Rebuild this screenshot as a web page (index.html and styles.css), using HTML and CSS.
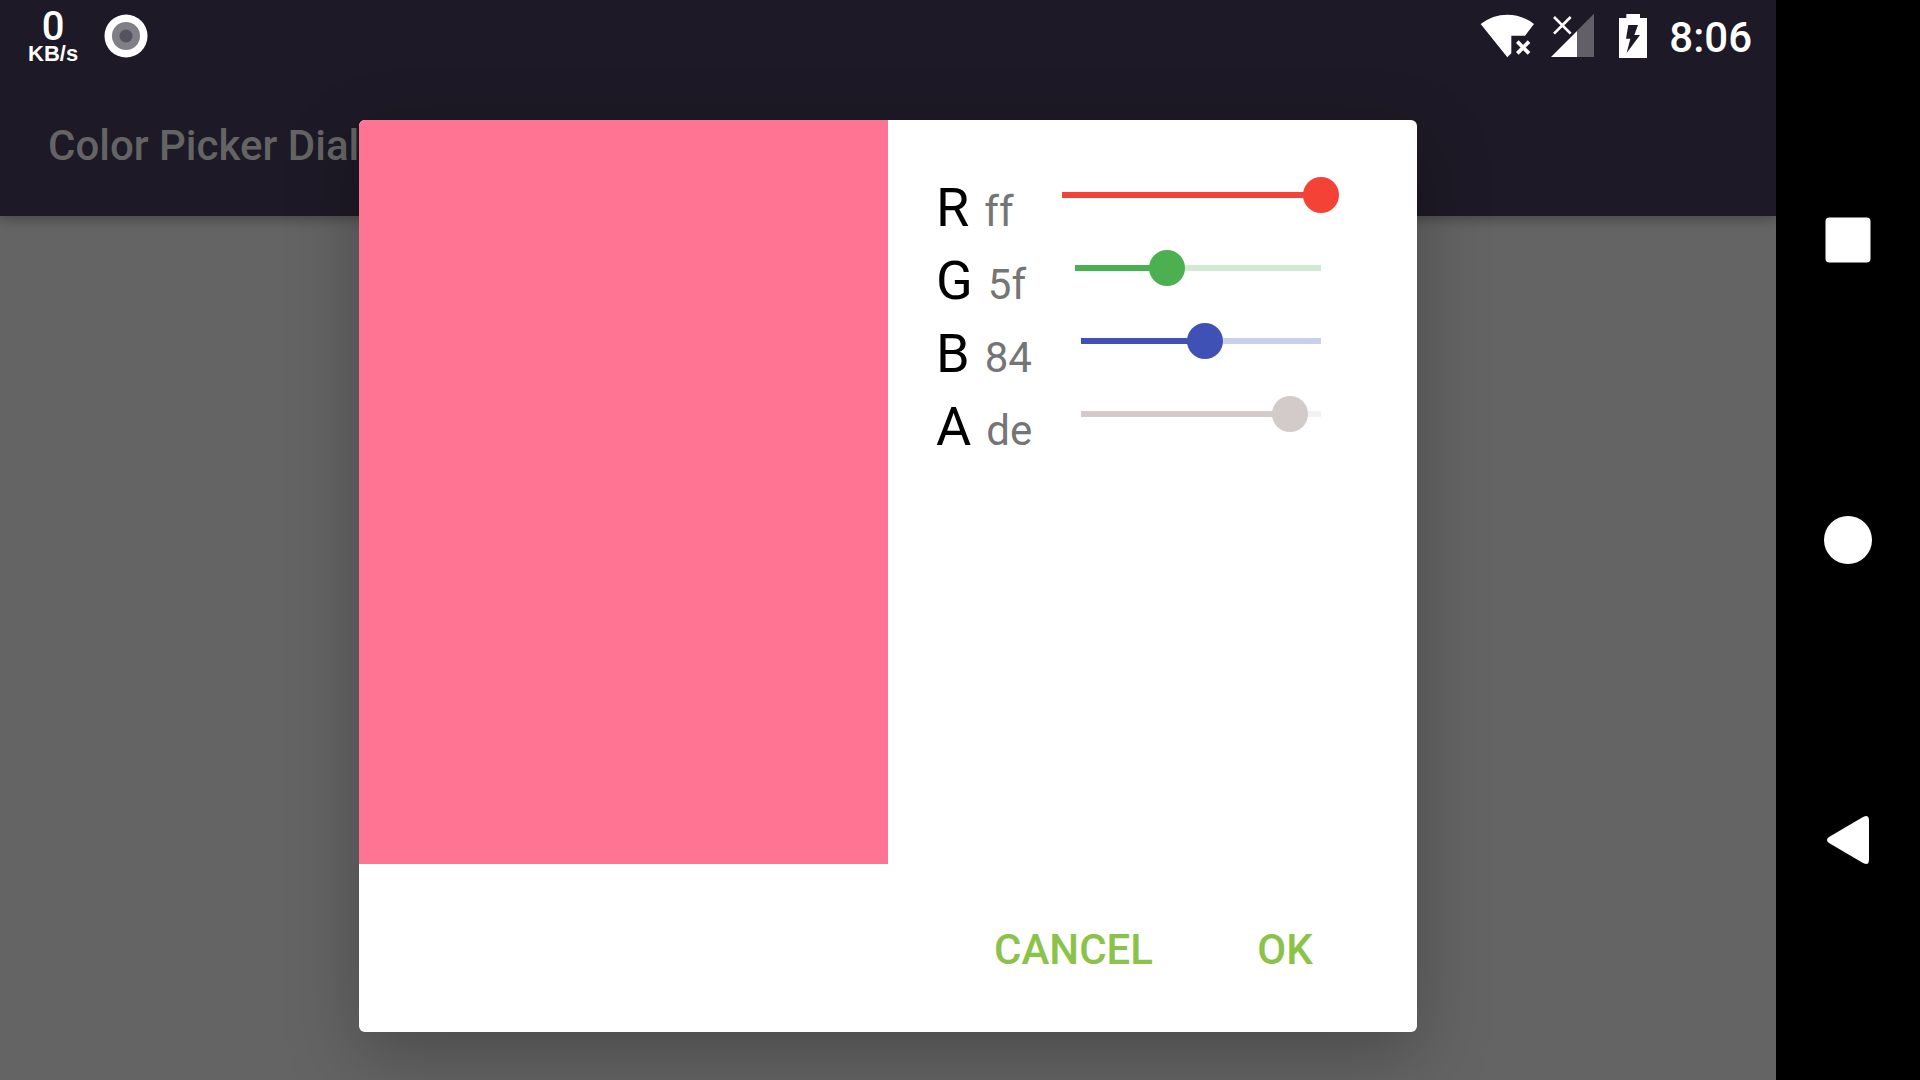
FILE: index.html
```html
<!DOCTYPE html>
<html lang="en">
<head>
<meta charset="utf-8">
<meta name="viewport" content="width=device-width, initial-scale=1">
<title>Color Picker Dialog</title>
<link rel="stylesheet" href="styles.css">
</head>
<body>
<div class="screen">
  <div class="status-bar">
    <div class="status-group">
      <div class="net-speed"><span class="net-value">0</span><span class="net-unit">KB/s</span></div>
      <svg class="record-icon" viewBox="0 0 44 44" aria-hidden="true">
        <circle cx="22" cy="22" r="21.5" fill="#fff"/>
        <circle cx="22" cy="22" r="14" fill="#807e86"/>
        <circle cx="22" cy="22" r="6.5" fill="#56535e"/>
      </svg>
    </div>
    <div class="status-group status-right">
      <svg class="wifi-icon" viewBox="60 0 165 216" aria-hidden="true">
        <path fill="#fff" d="M62 72Q98 44 142 44T222 72L195 107H154V160L142 172Z"/>
        <path stroke="#fff" stroke-width="11" d="M172 125L207 160M207 125L172 160"/>
      </svg>
      <svg class="signal-icon" viewBox="273 0 129 216" aria-hidden="true">
        <path fill="#625f69" d="M402 41V171H351V92Z"/>
        <path fill="#fff" d="M273 171L351 93V171Z"/>
        <path stroke="#fff" stroke-width="8" d="M282 51L332 101M332 51L282 101"/>
      </svg>
      <svg class="battery-icon" viewBox="477 0 84 216" aria-hidden="true">
        <path fill="#fff" d="M499 42H540V54H561V174H477V54H499Z"/>
        <path fill="#1d1926" d="M505 75H534L523 105H540L500 159L511 116H498Z"/>
      </svg>
      <time class="clock">8:06</time>
    </div>
  </div>
  <header class="app-bar"><h1 class="app-title">Color Picker Dialog</h1></header>
  <main class="content"></main>

  <div class="overlay">
    <form class="dialog" role="dialog" aria-label="Color picker">
      <div class="picker">
        <div class="preview"></div>
        <div class="channels">
          <div class="channel red">
            <label class="name" for="r">R</label><output class="value" for="r">ff</output>
            <input class="slider" id="r" type="range" min="0" max="255" value="255" style="--level:100%">
          </div>
          <div class="channel green">
            <label class="name" for="g">G</label><output class="value" for="g">5f</output>
            <input class="slider" id="g" type="range" min="0" max="255" value="95" style="--level:37.25%">
          </div>
          <div class="channel blue">
            <label class="name" for="b">B</label><output class="value" for="b">84</output>
            <input class="slider" id="b" type="range" min="0" max="255" value="132" style="--level:51.76%">
          </div>
          <div class="channel alpha">
            <label class="name" for="a">A</label><output class="value" for="a">de</output>
            <input class="slider" id="a" type="range" min="0" max="255" value="222" style="--level:87.06%">
          </div>
        </div>
      </div>
      <div class="actions">
        <button class="action" type="button">CANCEL</button>
        <button class="action" type="button">OK</button>
      </div>
    </form>
  </div>
</div>
<nav class="nav-bar" aria-label="System navigation">
  <button class="nav-button" type="button" aria-label="Recent apps">
    <svg class="nav-icon" viewBox="0 0 48 48"><rect x="1.5" y="1.5" width="45" height="45" rx="4"/></svg>
  </button>
  <button class="nav-button" type="button" aria-label="Home">
    <svg class="nav-icon" viewBox="0 0 48 48"><circle cx="24" cy="24" r="24"/></svg>
  </button>
  <button class="nav-button" type="button" aria-label="Back">
    <svg class="nav-icon" viewBox="0 0 48 48"><path d="M5 21L39 1Q41 0 43 0Q45 1 45 4V44Q45 47 43 48Q41 48 39 47L5 27Q1 24 5 21Z"/></svg>
  </button>
</nav>
</body>
</html>
```
FILE: styles.css
```css
* { box-sizing: border-box; }

body {
  margin: 0;
  min-height: 100vh;
  display: grid;
  grid-template-columns: 1fr 144px;
  background: #000;
  font-family: Roboto, "Liberation Sans", sans-serif;
  font-size: 42px;
}

.screen {
  position: relative;
  display: flex;
  flex-direction: column;
  overflow: hidden;
  background: #646464;
}

.status-bar {
  position: relative;
  z-index: 1;
  display: flex;
  justify-content: space-between;
  height: 72px;
  padding: 0 24px 0 28px;
  background: #1d1926;
  color: #fff;
}

.status-group {
  display: flex;
  align-items: center;
}

.net-speed {
  display: flex;
  flex-direction: column;
  align-items: center;
  margin-right: 26px;
  padding-top: 4px;
}

.net-value {
  font-size: 40px;
  font-weight: 500;
  line-height: 32px;
}

.net-unit {
  font: bold 22px/22px "Liberation Sans", Arial, sans-serif;
}

.record-icon { width: 44px; height: 44px; }
.wifi-icon { width: 55px; height: 72px; margin-right: 16px; }
.signal-icon { width: 43px; height: 72px; margin-right: 25px; }
.battery-icon { width: 28px; height: 72px; margin-right: 22px; }

.clock {
  font-weight: 500;
  line-height: 72px;
  padding-top: 4px;
}

.app-bar {
  display: flex;
  align-items: center;
  height: 144px;
  padding: 4px 48px 0;
  background: #1d1926;
  box-shadow: 0 3px 12px rgba(0, 0, 0, .3);
}

.app-title {
  margin: 0;
  color: #646464;
  font-size: 42px;
  font-weight: 500;
  line-height: 50px;
}

.content { flex: 1; }

.overlay {
  position: absolute;
  inset: 72px 0 0;
  z-index: 2;
  display: flex;
  justify-content: center;
  padding: 48px;
}

.dialog {
  display: flex;
  flex-direction: column;
  width: 100%;
  max-width: 1058px;
  background: #fff;
  border-radius: 6px;
  box-shadow: 0 24px 72px rgba(0, 0, 0, .25);
}

.picker {
  flex: 1;
  display: grid;
  grid-template-columns: 1fr 1fr;
}

.preview {
  background: #ff7393;
  border-top-left-radius: 6px;
}

.channels { padding: 48px; }

.channel {
  display: flex;
  align-items: baseline;
  height: 73px;
}

.name {
  padding-top: 6px;
  font-size: 54px;
  line-height: 67px;
  color: #000;
}

.value {
  margin-left: 15px;
  line-height: 50px;
  color: #757575;
}

.slider {
  -webkit-appearance: none;
  appearance: none;
  align-self: flex-start;
  flex: 1;
  min-width: 0;
  height: 54px;
  margin: 0 30px 0 31px;
  background: linear-gradient(to right, var(--color) var(--level), var(--rest) var(--level)) center / calc(100% - 36px) 6px no-repeat;
}

.slider::-webkit-slider-thumb {
  -webkit-appearance: none;
  width: 36px;
  height: 36px;
  border-radius: 50%;
  background: var(--color);
}

.red { --color: #f44336; --rest: #fccfcc; }
.green { --color: #4caf50; --rest: #d1ebd3; }
.blue { --color: #3f51b5; --rest: #cad0ec; }
.alpha { --color: #d3cbc9; --rest: #f4f2f1; }

.actions {
  display: flex;
  justify-content: flex-end;
  align-items: center;
  padding: 14px 36px 10px;
}

.action {
  min-width: 192px;
  height: 144px;
  padding: 0 36px;
  border: 0;
  background: none;
  color: #8bc34a;
  font: 500 42px/50px Roboto, "Liberation Sans", sans-serif;
}

.nav-bar {
  display: flex;
  flex-direction: column;
  align-items: stretch;
  justify-content: center;
}

.nav-button {
  display: flex;
  align-items: center;
  justify-content: center;
  height: 300px;
  padding: 0;
  border: 0;
  background: none;
}

.nav-icon {
  width: 48px;
  height: 48px;
  fill: #fff;
}
```
